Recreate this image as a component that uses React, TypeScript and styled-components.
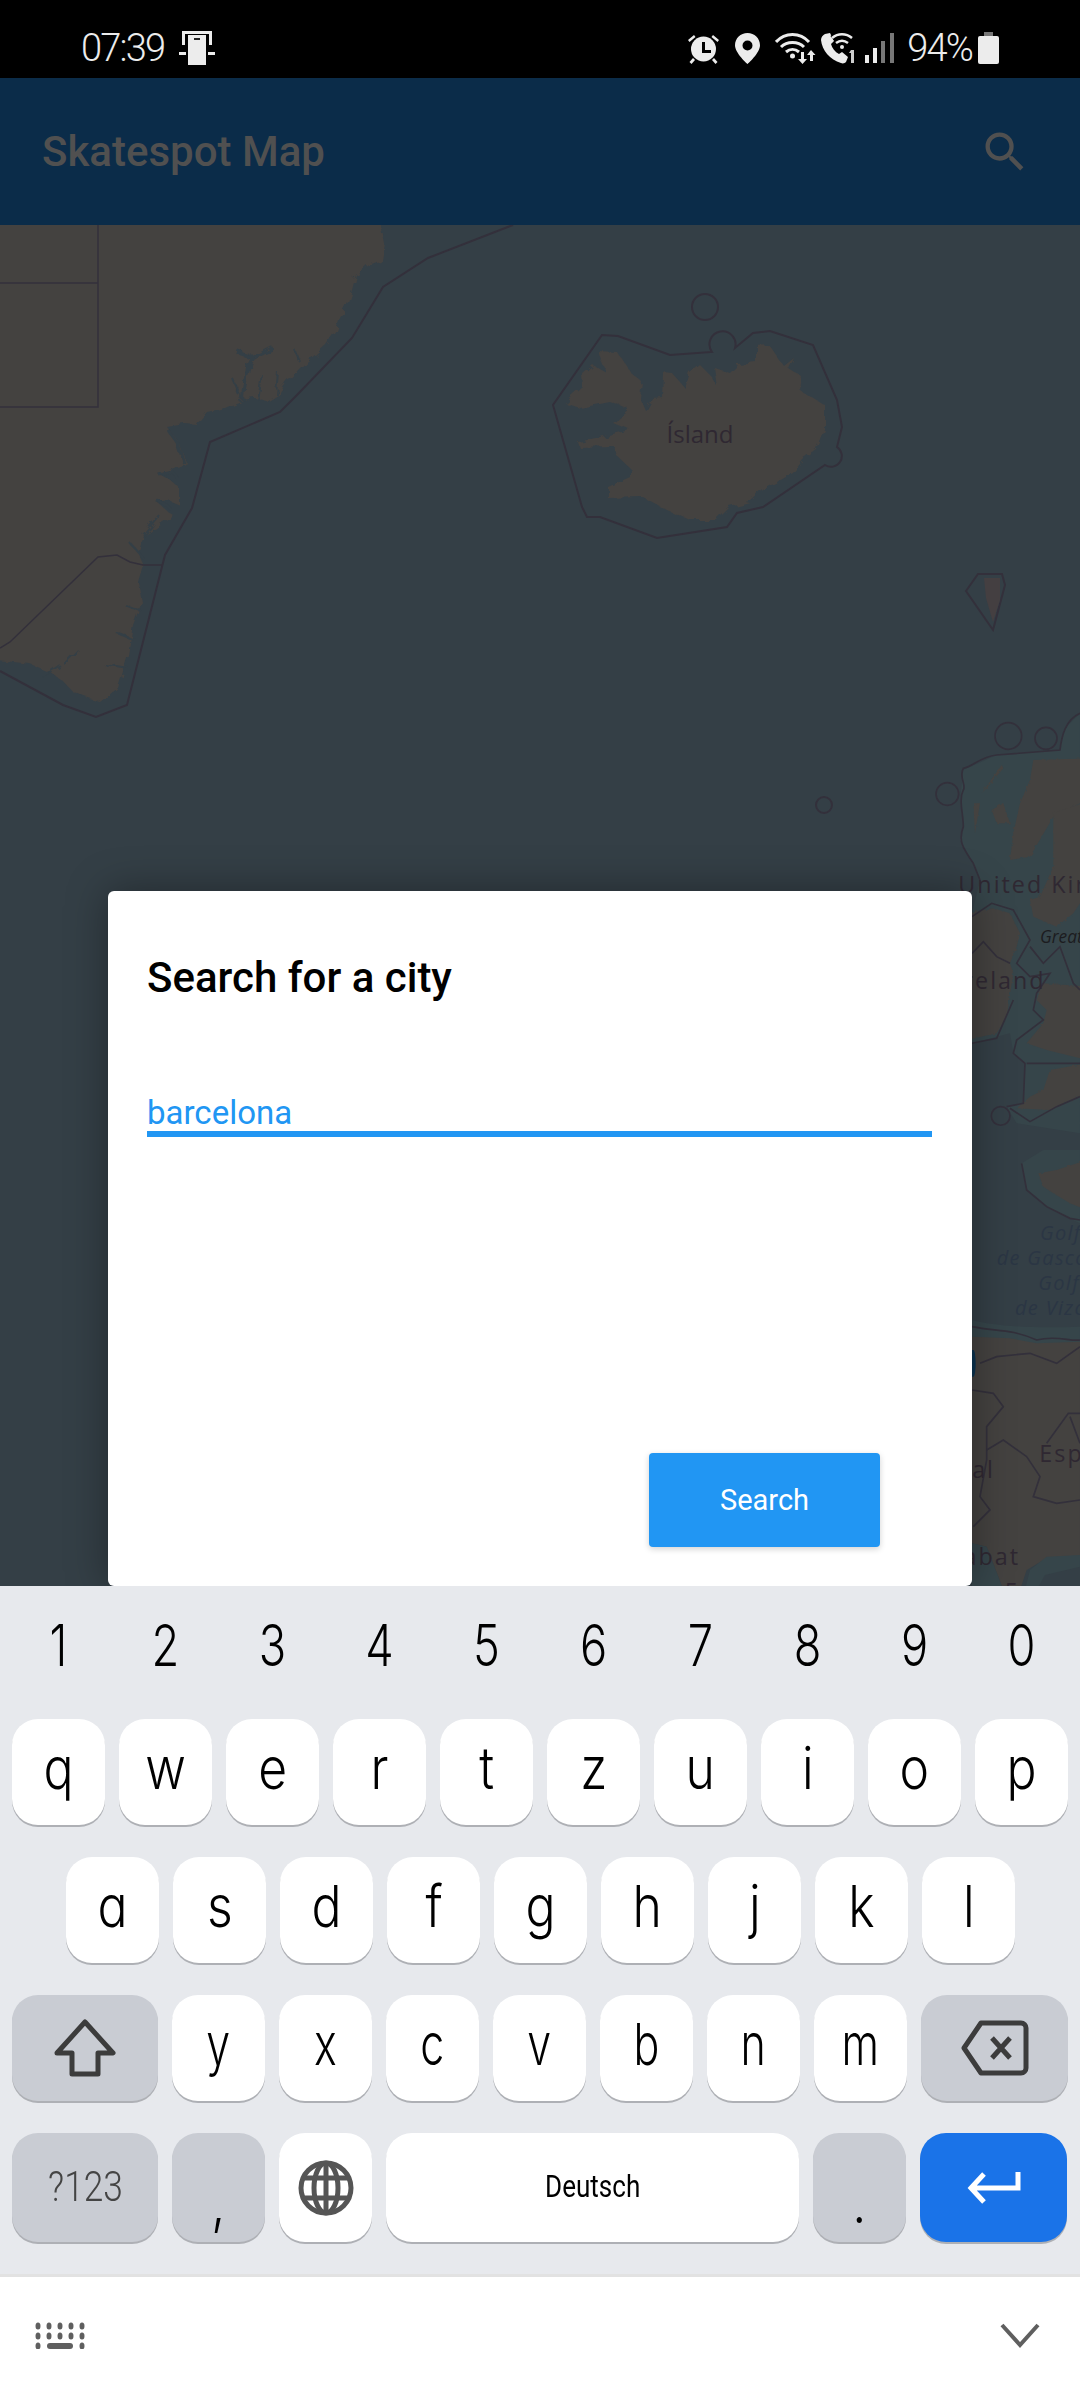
import styled, { createGlobalStyle } from 'styled-components';

const WATER = '#343f46';
const SHELF = '#36454a';
const LAND = '#444240';
const LINE = '#33303b';
const ROW_ONE = ['q', 'w', 'e', 'r', 't', 'z', 'u', 'i', 'o', 'p'];
const ROW_TWO = ['a', 's', 'd', 'f', 'g', 'h', 'j', 'k', 'l'];
const ROW_THREE = ['y', 'x', 'c', 'v', 'b', 'n', 'm'];
const DIGITS = ['1', '2', '3', '4', '5', '6', '7', '8', '9', '0'];

function StatusLeftIcon() {
  return (
    <StatusIcon width="36" height="34" viewBox="0 0 36 34">
      <path d="M3 0h30v14h-3V3H6v11H3z" fill="#ececec" />
      <path d="M0 21h7v3H0zM29 21h7v3h-7z" fill="#ececec" />
      <path d="M9 4h18v30H9z" fill="#ececec" />
      <path d="M15 7h6v2h-6z" fill="#222" />
    </StatusIcon>
  );
}

function AlarmIcon() {
  return (
    <StatusIcon width="33" height="31" viewBox="0 0 33 31">
      <circle cx="16.5" cy="16" r="12.5" fill="#ececec" />
      <path d="M15 9h3v8h6v3h-9z" fill="#000" />
      <path d="M1 7l6-5 1.5 2-6 5zM32 7l-6-5-1.5 2 6 5zM6 25l2 2-3.500 4-2-2zM27 25l-2 2 3.500 4 2-2z" fill="#ececec" />
    </StatusIcon>
  );
}

function PinIcon() {
  return (
    <StatusIcon width="25" height="31" viewBox="0 0 25 31">
      <path fillRule="evenodd" d="M12.500 0C5.600 0 0 5.400 0 12.200 0 20 12.500 31 12.500 31S25 20 25 12.200C25 5.400 19.400 0 12.500 0zm0 7.500a5 5 0 1 1 0 10 5 5 0 0 1 0-10z" fill="#ececec" />
    </StatusIcon>
  );
}

function WifiIcon() {
  return (
    <StatusIcon width="42" height="32" viewBox="0 0 42 32">
      <g fill="none" stroke="#ececec" strokeWidth="3">
        <path d="M1 10C10 0 25 0 34 10" />
        <path d="M6 15c6-6 17-6 23 0" />
        <path d="M11 20c4-3.500 9-3.500 13 0" />
      </g>
      <circle cx="17.500" cy="24" r="2.500" fill="#ececec" />
      <path d="M26 20h3v7h3l-4.500 5-4.500-5h3zM36 18l4.500 5H38v6h-3v-6h-3z" fill="#ececec" />
    </StatusIcon>
  );
}

function CallWifiIcon() {
  return (
    <StatusIcon width="37" height="32" viewBox="0 0 37 32">
      <path d="M5 2l5-1 4 8-3 3c1 4 4 8 8 10l3-2 6 5-2 5c-1 1-3 2-5 1C10 28 2 18 1 8c0-3 2-5 4-6z" fill="#ececec" />
      <g fill="none" stroke="#000" strokeWidth="5">
        <path d="M12 6c6-5 14-5 20 0" />
      </g>
      <g fill="none" stroke="#ececec" strokeWidth="2.500">
        <path d="M12 6c6-5 14-5 20 0" />
        <path d="M16 11c4-3 8-3 12 0" />
      </g>
      <circle cx="22" cy="15" r="2" fill="#ececec" />
      <path d="M31 18h3v13h-3v-10h-2z" fill="#cfcfcf" />
    </StatusIcon>
  );
}

function SignalIcon() {
  return (
    <StatusIcon width="29" height="30" viewBox="0 0 29 30">
      <path d="M0 22h4v8H0zM8 15h4v15H8z" fill="#ececec" />
      <path d="M16 8h4v22h-4zM25 0h4v30h-4z" fill="#777" />
    </StatusIcon>
  );
}

function BatteryIcon() {
  return (
    <StatusIcon width="21" height="32" viewBox="0 0 21 32">
      <path d="M6 0h9v4H6z" fill="#777" />
      <path d="M2 4h17a2 2 0 0 1 2 2v24a2 2 0 0 1-2 2H2a2 2 0 0 1-2-2V6a2 2 0 0 1 2-2z" fill="#ececec" />
    </StatusIcon>
  );
}

function MapLayer() {
  return (
    <MapDrawing viewBox="0 225 1080 1361">
      <defs>
        {/* roughens the coast so it doesn't read as a polygon */}
        <filter id="coast" x="-5%" y="-5%" width="110%" height="110%" colorInterpolationFilters="sRGB">
          <feTurbulence type="fractalNoise" baseFrequency="0.09" numOctaves="3" seed="4" />
          <feDisplacementMap in="SourceGraphic" scale="9" />
          <feGaussianBlur stdDeviation="0.6" />
        </filter>
      </defs>
      <rect x="0" y="225" width="1080" height="1361" fill={WATER} />

      {/* Greenland */}
      <g filter="url(#coast)">
        <path
          fill={LAND}
          d="M-20 215L378 215 384 243 381 259 368 264 356 275 352 290 347 305 340 318 336 330 326 345 316 354 300 368 287 382 278 395 267 402 255 398 243 400 225 408 207 412 200 420 197 425 185 424 167 427 175 437 180 445 187 465 172 470 157 473 170 480 180 488 180 505 168 500 157 502 166 510 173 515 160 524 143 535 137 552 143 565 138 582 142 602 133 625 128 655 118 688 100 702 86 698 73 692 62 680 50 672 30 664 -20 658Z"
        />
        <g fill="none" stroke={WATER}>
          <path strokeWidth="4" d="M238 353l15 5 20-10M253 358l-5 10-4 20-1 12" />
          <path strokeWidth="2" d="M295 350l5 12M278 372l-2 22M262 375l-4 26M232 378l8 18" />
          <path strokeWidth="3" d="M168 430l10 14 6 20M158 474l14-3 6 8M156 500l14 8" />
          <path strokeWidth="2" d="M143 535l16-20M145 560l-14-16M140 610l-16-6M136 640l-20-8M128 668l-24-4M60 665l-18 12M78 650l-14 14" />
        </g>
      </g>
      <g fill="none" stroke={LINE} strokeWidth="1.500">
        <path d="M98 225V407H0M0 283H98" />
        <path d="M0 648L10 642 98 557 117 555 130 562 143 565H163" />
      </g>
      <path fill="none" stroke={LINE} strokeWidth="2" d="M513 225L428 258 383 287 352 338 297 395 280 412 210 442 192 508 165 555 127 705 96 717 63 705 0 671" />

      {/* Iceland */}
      <path
        filter="url(#coast)"
        fill={LAND}
        d="M598 352L618 353 630 372 642 382 640 398 645 410 652 398 662 397 663 372 672 373 685 388 690 373 700 365 712 377 718 388 715 368 730 373 738 365 757 363 757 347 770 346 783 365 793 357 788 368 802 377 800 390 825 405 825 430 817 450 803 460 793 473 763 490 750 502 730 507 717 520 690 520 667 510 643 497 608 498 608 487 630 477 630 468 618 457 615 447 580 448 578 442 630 430 613 423 630 410 610 402 580 408 565 403 583 387 582 375 593 365 607 373Z"
      />
      <g fill="none" stroke={LINE} strokeWidth="2">
        <path d="M602 335L618 336 670 355 712 352 A13 13 0 1 1 735 348L753 333 770 331 813 345 837 400 842 427 837 447 A9 9 0 1 1 825 465L763 507 737 513 727 527 657 538 600 517 587 517 582 507 553 405Z" />
        <circle cx="705" cy="307" r="13" />
        <circle cx="824" cy="805" r="8" />
        <path d="M966 591L978 574 1002 574 1005 585 993 630Z" />
      </g>
      <path d="M984 578L1000 578 1000 600 993 622 986 598Z" fill="#443f41" />
      <MapLabel x="700" y="443" $size={24}>Ísland</MapLabel>

      {/* United Kingdom and Ireland */}
      <g transform="translate(930 700) scale(.3333)">
        <path fill={SHELF} d="M450 40L400 90 390 150 200 165 100 210 90 300 100 380 90 420 130 490 150 540 126 640V1030L240 1000 250 1060 285 1090 280 1210 230 1220 260 1270 450 1300Z" />
        <g filter="url(#coast)">
          <path fill={LAND} d="M310 180L470 175V300L370 350 300 470 240 480 250 400 270 310 300 240Z" />
          <path fill={LAND} d="M370 340L470 305V580L430 640 380 680 310 650 300 600 330 590 370 500Z" />
          <path fill={LAND} d="M215 195L155 280 170 265 220 205ZM130 310L150 310 135 400ZM185 330L220 310 240 370 200 370Z" />
          <path fill={LAND} d="M110 640L190 625 240 640 270 700 260 740 240 790 250 820 230 950 200 1000 110 1020Z" />
          <path fill={LAND} d="M340 850L470 860V1080L350 1050 290 1030 340 970 350 930 320 900Z" />
          <path fill={LAND} d="M360 1110L470 1090V1180L360 1230 260 1225 300 1190 340 1170Z" />
        </g>
        <g fill="none" stroke={LINE} strokeWidth="5">
          <path d="M450 40C405 60 395 110 390 150L200 165C150 170 130 200 100 205 85 230 110 255 100 270 85 300 100 340 100 380 85 420 95 440 130 490L150 540" />
          <circle cx="235" cy="108" r="40" />
          <circle cx="348" cy="115" r="33" />
          <circle cx="52" cy="282" r="34" />
          <path d="M126 650L185 610 250 630 300 720 260 790 300 830 360 820 320 880 310 930 340 960 260 1020 250 1060 285 1090 280 1210 230 1220" />
          <path d="M126 760L160 725 200 770 240 790M126 1030L200 1015 250 900" />
          <circle cx="212" cy="1248" r="28" />
          <path d="M240 1225L300 1265 380 1220 450 1190M300 740L340 790 390 740 430 850 450 870M290 1090H450" />
        </g>
        <MapLabel x="85" y="580" $size={70} $anchor="start" $spacing={6}>United Kingdom</MapLabel>
        <MapLabel x="330" y="730" $size={52} $anchor="start" $italic $dark>Great Britain</MapLabel>
        <MapLabel x="75" y="868" $size={70} $anchor="start" $spacing={6}>Ireland</MapLabel>
      </g>

      {/* France and Iberia */}
      <g transform="translate(930 1150) scale(.3333)">
        <path fill={SHELF} d="M275 40L340 0H450V220L350 170 290 120ZM126 510C200 530 320 535 450 530V590H126Z" />
        <path filter="url(#coast)" fill={LAND} d="M325 70L380 60 470 30V180L420 160 370 130 340 110Z" />
        <path fill={LAND} d="M126 560L240 565 320 580 450 575V1230L350 1225 290 1260 270 1320H220L170 1190 126 1180Z" />
        <path fill={SHELF} d="M126 1180L170 1190 220 1320H126ZM285 1320L300 1260 350 1220 450 1215V1320Z" />
        <path fill={WATER} d="M320 1320L345 1275 450 1250V1320Z" />
        <g fill="none" stroke={LINE} strokeWidth="5">
          <path d="M275 40L290 120 350 170 420 205 450 210" />
          <path d="M126 530C200 545 240 535 320 570 380 555 420 575 450 570" />
          <path d="M150 640L200 620 300 610 380 640 450 590M126 720L190 730 220 770 170 830 170 930 150 1040 180 1080 130 1130" />
          <path d="M290 920L220 870 170 900M290 920L330 980 310 1040 380 1060 450 1050M350 880L415 790H450M420 800L450 880" />
        </g>
        <path d="M126 600h4a7 40 0 0 1 0 80h-4z" fill="#0a3350" />
        <MapLabel x="330" y="270" $size={60} $anchor="start" $italic $sea $spacing={4}>Golfo</MapLabel>
        <MapLabel x="200" y="345" $size={60} $anchor="start" $italic $sea $spacing={4}>de Gascogne</MapLabel>
        <MapLabel x="325" y="420" $size={60} $anchor="start" $italic $sea $spacing={4}>Golfo</MapLabel>
        <MapLabel x="255" y="495" $size={60} $anchor="start" $italic $sea $spacing={4}>de Vizcaya</MapLabel>
        <MapLabel x="328" y="935" $size={70} $anchor="start" $spacing={6}>España</MapLabel>
        <MapLabel x="195" y="985" $size={70} $anchor="end" $spacing={6}>Portugal</MapLabel>
        <MapLabel x="270" y="1245" $size={70} $anchor="end" $spacing={6}>Rabat</MapLabel>
        <MapLabel x="270" y="1350" $size={70} $anchor="end" $spacing={6}>ee 5</MapLabel>
      </g>
    </MapDrawing>
  );
}

function App() {
  return (
    <>
      <GlobalStyle />
      <Screen>
        <StatusBar>
          <StatusGroup>
            <StatusText>07:39</StatusText>
            <StatusGap $w={15} />
            <StatusLeftIcon />
          </StatusGroup>
          <StatusGroup>
            <AlarmIcon />
            <StatusGap $w={15} />
            <PinIcon />
            <StatusGap $w={15} />
            <WifiIcon />
            <StatusGap $w={3} />
            <CallWifiIcon />
            <StatusGap $w={8} />
            <SignalIcon />
            <StatusGap $w={13} />
            <StatusText>94%</StatusText>
            <StatusGap $w={6} />
            <BatteryIcon />
          </StatusGroup>
        </StatusBar>

        <AppBar>
          <AppTitle>Skatespot Map</AppTitle>
          <svg width="52" height="52" viewBox="0 0 24 24">
            <path
              fill="#505050"
              d="M15.5 14h-.79l-.28-.27A6.471 6.471 0 0 0 16 9.5 6.5 6.5 0 1 0 9.5 16c1.61 0 3.09-.59 4.23-1.57l.27.28v.79l5 4.99L20.49 19l-4.99-5zm-6 0C7.01 14 5 11.99 5 9.5S7.01 5 9.5 5 14 7.01 14 9.5 11.99 14 9.5 14z"
            />
          </svg>
        </AppBar>

        <MapArea>
          <MapLayer />
          <Dialog>
            <DialogTitle>Search for a city</DialogTitle>
            <CityInput>barcelona</CityInput>
            <SearchButton>Search</SearchButton>
          </Dialog>
        </MapArea>

        <Keyboard>
          <NumberRow>
            {DIGITS.map((d) => (
              <Digit key={d}>{d}</Digit>
            ))}
          </NumberRow>
          <KeyRow>
            {ROW_ONE.map((k) => (
              <Key key={k}>
                <KeyText>{k}</KeyText>
              </Key>
            ))}
          </KeyRow>
          <KeyRow $inset={66}>
            {ROW_TWO.map((k) => (
              <Key key={k}>
                <KeyText>{k}</KeyText>
              </Key>
            ))}
          </KeyRow>
          <KeyRow>
            <Key $w={146} $tone="func">
              <svg width="62" height="60" viewBox="0 0 62 60">
                <path fill="none" stroke="#3c3c3c" strokeWidth="5" strokeLinejoin="round" d="M31 4L59 35H44V56H18V35H3Z" />
              </svg>
            </Key>
            {ROW_THREE.map((k) => (
              <Key key={k}>
                <KeyText $narrow>{k}</KeyText>
              </Key>
            ))}
            <Key $w={147} $tone="func">
              <svg width="68" height="56" viewBox="0 0 68 56">
                <path fill="none" stroke="#3c3c3c" strokeWidth="5" strokeLinejoin="round" d="M20 3H60a5 5 0 0 1 5 5V48a5 5 0 0 1-5 5H20L3 28Z" />
                <path fill="none" stroke="#3c3c3c" strokeWidth="5" d="M31 18L49 38M49 18L31 38" />
              </svg>
            </Key>
          </KeyRow>
          <KeyRow>
            <Key $w={146} $tone="func" $tall>
              <SmallKeyText>?123</SmallKeyText>
            </Key>
            <Key $tone="func" $tall $punct>
              <KeyText>,</KeyText>
            </Key>
            <Key $tall>
              <svg width="56" height="56" viewBox="0 0 56 56">
                <g fill="none" stroke="#555" strokeWidth="5">
                  <circle cx="28" cy="28" r="25" />
                  <ellipse cx="28" cy="28" rx="12" ry="25" />
                  <path d="M28 3V53M5 18H51M5 38H51" />
                </g>
              </svg>
            </Key>
            <Key $w={413} $tall>
              <LangLabel>Deutsch</LangLabel>
            </Key>
            <Key $tone="func" $tall $punct>
              <KeyText>.</KeyText>
            </Key>
            <Key $w={147} $tone="enter" $tall>
              <svg width="54" height="32" viewBox="0 0 54 32">
                <path fill="none" stroke="#fff" strokeWidth="5" d="M51 0V16H5M17 2L4 16 17 30" />
              </svg>
            </Key>
          </KeyRow>
          <KeyboardFooter>
            <svg width="50" height="27" viewBox="0 0 50 27">
              <g fill="#5f5f5f">
                {[0, 1].map((row) =>
                  [0, 1, 2, 3, 4].map((col) => (
                    <ellipse key={`${row}-${col}`} cx={3 + col * 11} cy={4 + row * 10} rx="2.500" ry="3.500" />
                  ))
                )}
                <ellipse cx="3" cy="24" rx="2.500" ry="3.500" />
                <rect x="12" y="21" width="26" height="6" rx="3" />
                <ellipse cx="47" cy="24" rx="2.500" ry="3.500" />
              </g>
            </svg>
            <svg width="40" height="25" viewBox="0 0 40 25">
              <path fill="none" stroke="#5f5f5f" strokeWidth="4" d="M2 2L20 22 38 2" />
            </svg>
          </KeyboardFooter>
        </Keyboard>
      </Screen>
    </>
  );
}

const GlobalStyle = createGlobalStyle`
  html, body {
    margin: 0;
    padding: 0;
    background: #000;
  }
  * {
    box-sizing: border-box;
  }
`;

const Screen = styled.div`
  width: 1080px;
  height: 2400px;
  display: flex;
  flex-direction: column;
  overflow: hidden;
  font-family: Roboto, 'Liberation Sans', sans-serif;
`;

const StatusBar = styled.div`
  height: 78px;
  flex: none;
  padding: 0 81px;
  display: flex;
  justify-content: space-between;
  align-items: flex-start;
  background: #000;
`;

const StatusGroup = styled.div`
  height: 78px;
  display: flex;
  align-items: center;
  padding-top: 18px;
`;

const StatusText = styled.span`
  font-size: 38px;
  font-weight: 300;
  line-height: 40px;
  letter-spacing: -1.8px;
  color: #ececec;
`;

const StatusGap = styled.span<{ $w: number }>`
  width: ${({ $w }) => $w}px;
  flex: none;
`;

const StatusIcon = styled.svg`
  display: block;
  flex: none;
`;

const AppBar = styled.div`
  height: 147px;
  flex: none;
  padding: 0 49px 0 42px;
  display: flex;
  justify-content: space-between;
  align-items: center;
  background: #0b2c49;
`;

const AppTitle = styled.div`
  font-size: 42px;
  font-weight: 500;
  color: #505050;
`;

const MapArea = styled.div`
  height: 1361px;
  flex: none;
  position: relative;
  overflow: hidden;
  background: ${WATER};
`;

const MapDrawing = styled.svg`
  display: block;
  width: 1080px;
  height: 1361px;
`;

const MapLabel = styled.text<{
  $size: number;
  $anchor?: string;
  $spacing?: number;
  $italic?: boolean;
  $dark?: boolean;
  $sea?: boolean;
}>`
  font-family: 'Open Sans', 'Noto Sans', sans-serif;
  font-size: ${({ $size }) => $size}px;
  font-style: ${({ $italic }) => ($italic ? 'italic' : 'normal')};
  letter-spacing: ${({ $spacing }) => $spacing ?? 0}px;
  text-anchor: ${({ $anchor }) => $anchor ?? 'middle'};
  fill: ${({ $dark, $sea }) => ($dark ? '#1c1c20' : $sea ? '#2b3644' : '#2f2832')};
`;

const Dialog = styled.div`
  position: absolute;
  left: 108px;
  top: 666px;
  width: 864px;
  height: 695px;
  padding: 63px 40px 39px 39px;
  display: flex;
  flex-direction: column;
  background: #fff;
  border-radius: 6px;
  box-shadow: 0 0 42px rgba(0, 0, 0, 0.35);
`;

const DialogTitle = styled.div`
  font-size: 42px;
  font-weight: 500;
  line-height: 48px;
  color: #000;
`;

const CityInput = styled.div`
  margin-top: 88px;
  height: 47px;
  line-height: 46px;
  font-size: 33px;
  color: #2196f3;
  border-bottom: 6px solid #2196f3;
`;

const SearchButton = styled.div`
  margin-top: auto;
  margin-right: 52px;
  align-self: flex-end;
  width: 231px;
  height: 94px;
  display: flex;
  align-items: center;
  justify-content: center;
  font-size: 29px;
  color: #fff;
  background: #2196f3;
  border-radius: 4px;
  box-shadow: 0 2px 6px rgba(0, 0, 0, 0.18);
`;

const Keyboard = styled.div`
  flex: 1;
  display: flex;
  flex-direction: column;
  background: #e7e9ed;
`;

const NumberRow = styled.div`
  height: 133px;
  flex: none;
  padding: 0 12px 15px;
  display: flex;
  gap: 14px;
  align-items: center;
`;

const Digit = styled.div`
  width: 93px;
  text-align: center;
  font-family: Inter, Roboto, sans-serif;
  font-size: 58px;
  font-weight: 350;
  color: #000;
  transform: scaleX(0.78);
`;

const KeyRow = styled.div<{ $inset?: number }>`
  height: 138px;
  flex: none;
  padding-left: ${({ $inset }) => $inset ?? 12}px;
  display: flex;
  gap: 14px;
  align-items: flex-start;
`;

const keyColors: Record<string, string> = { func: '#c9ccd3', enter: '#1a73e8', plain: '#fff' };

const Key = styled.div<{ $w?: number; $tone?: string; $punct?: boolean; $tall?: boolean }>`
  width: ${({ $w }) => $w ?? 93}px;
  height: ${({ $tall }) => ($tall ? 109 : 106)}px;
  flex: none;
  display: flex;
  align-items: center;
  justify-content: center;
  padding-bottom: ${({ $punct }) => ($punct ? 0 : 8)}px;
  padding-top: ${({ $punct }) => ($punct ? 28 : 0)}px;
  background: ${({ $tone }) => keyColors[$tone ?? 'plain']};
  border-radius: 26px;
  box-shadow: 0 2px 0 #aeb0b5;

  svg {
    margin-top: 8px;
  }
`;

const KeyText = styled.span<{ $narrow?: boolean }>`
  display: inline-block;
  font-family: Inter, Roboto, sans-serif;
  font-feature-settings: 'cv11' 1;
  font-size: 58px;
  font-weight: 350;
  color: #000;
  transform: scaleX(${({ $narrow }) => ($narrow ? 0.74 : 0.86)});
`;

const SmallKeyText = styled.span`
  display: inline-block;
  font-size: 42px;
  font-weight: 300;
  color: #444;
  margin-top: 6px;
  transform: scaleX(0.84);
`;

const LangLabel = styled.span`
  display: inline-block;
  font-size: 31px;
  font-weight: 400;
  color: #000;
  margin-top: 6px;
  transform: scaleX(0.84);
`;

const KeyboardFooter = styled.div`
  flex: 1;
  margin-top: 3px;
  padding: 0 40px 6px 35px;
  display: flex;
  justify-content: space-between;
  align-items: center;
  background: #fff;
  border-top: 3px solid #e2e2e2;
`;

export default App;
